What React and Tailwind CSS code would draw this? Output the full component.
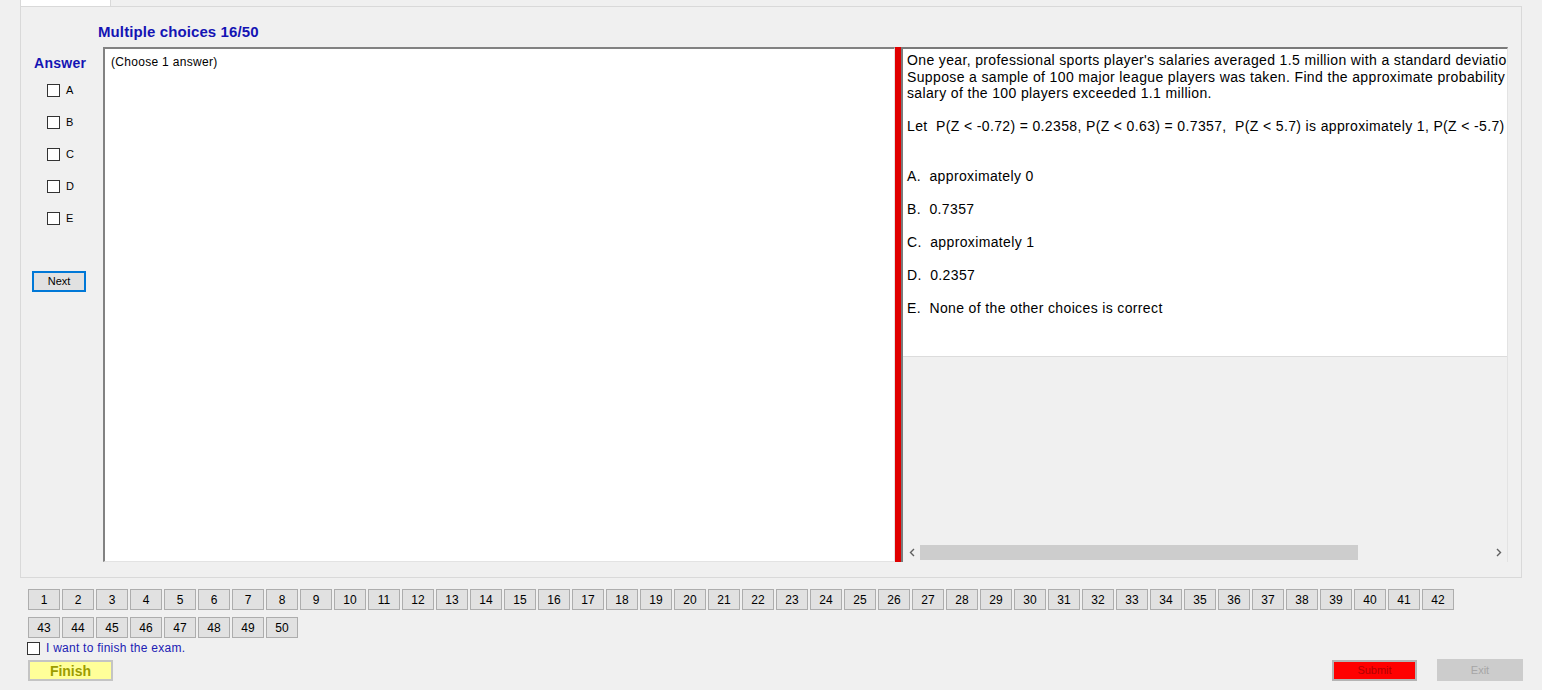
import React from "react";

const questionLines = [
  "One year, professional sports player's salaries averaged 1.5 million with a standard deviation of 0.8 million.",
  "Suppose a sample of 100 major league players was taken. Find the approximate probability that the average",
  "salary of the 100 players exceeded 1.1 million.",
  "",
  "Let  P(Z < -0.72) = 0.2358, P(Z < 0.63) = 0.7357,  P(Z < 5.7) is approximately 1, P(Z < -5.7) is approximately 0",
  "",
  "",
  "A.  approximately 0",
  "",
  "B.  0.7357",
  "",
  "C.  approximately 1",
  "",
  "D.  0.2357",
  "",
  "E.  None of the other choices is correct",
];

const choices = ["A", "B", "C", "D", "E"];

function Box() {
  return <span className="block w-[13px] h-[13px] border border-[#333] bg-white shrink-0" />;
}

export default function App() {
  const numbers = Array.from({ length: 50 }, (_, i) => i + 1);

  return (
    <div className="w-[1542px] h-[690px] bg-[#f0f0f0] overflow-hidden flex flex-col font-['Liberation_Sans',Arial,sans-serif] text-black">
      {/* tab strip */}
      <div className="h-[6px] flex">
        <div className="ml-[20px] w-[91px] h-[6px] bg-white border-x border-[#d9d9d9]" />
      </div>

      {/* tab page */}
      <div className="ml-[20px] w-[1502px] h-[572px] border border-[#d9d9d9] bg-[#f0f0f0] flex flex-col pt-[17px]">
        <div className="pl-[77px] h-[16px] leading-[16px] text-[15px] font-bold text-[#1414b4] tracking-[0.1px] mb-[7px]">
          Multiple choices 16/50
        </div>

        <div className="flex h-[515px]">
          {/* answer column */}
          <div className="w-[82px] shrink-0 flex flex-col pt-[8px]">
            <div className="pl-[13px] h-[16px] leading-[16px] text-[14px] font-bold text-[#1414b4] tracking-[0.3px]">
              Answer
            </div>
            <div className="flex flex-col gap-[12px] mt-[9px] pl-[26px]">
              {choices.map((c) => (
                <div key={c} className="h-[20px] flex items-center gap-[6px] text-[11px]">
                  <Box />
                  <span>{c}</span>
                </div>
              ))}
            </div>
            <div className="pl-[11px] mt-[40px]">
              <button className="w-[54px] h-[21px] border-2 border-[#0078d7] bg-[#e1e1e1] text-[11px] leading-none">
                Next
              </button>
            </div>
          </div>

          {/* answer text box */}
          <div className="w-[792px] shrink-0 bg-white border-t-2 border-l-2 border-[#828282] border-r border-b border-r-[#e3e3e3] border-b-[#e3e3e3] pl-[6px] pt-[6px] text-[12px] leading-[15px] tracking-[0.3px]">
            (Choose 1 answer)
          </div>

          {/* splitter */}
          <div className="w-[6px] shrink-0 bg-[#e00000]" />

          {/* question panel */}
          <div className="w-[607px] shrink-0 flex flex-col border-l-2 border-t-2 border-[#7a7a7a] border-r border-r-[#e3e3e3]">
            <div className="h-[308px] bg-white border-b border-[#dcdcdc] overflow-hidden pl-[4px] pt-[3px] text-[14px] leading-[16.5px] tracking-[0.36px] whitespace-pre">
              {questionLines.map((l, i) => (
                <div key={i} className="h-[16.5px]">
                  {l}
                </div>
              ))}
            </div>
            <div className="flex-1" />
            <div className="h-[17px] flex items-stretch mb-[1px] bg-[#f0f0f0]">
              <div className="w-[17px] flex items-center justify-center text-[#606060]">
                <svg width="6" height="9" viewBox="0 0 6 9">
                  <path d="M5 1 L1.5 4.5 L5 8" stroke="currentColor" strokeWidth="1.4" fill="none" />
                </svg>
              </div>
              <div className="flex-1 flex items-center">
                <div className="w-[438px] h-[15px] bg-[#cdcdcd]" />
              </div>
              <div className="w-[17px] flex items-center justify-center text-[#606060]">
                <svg width="6" height="9" viewBox="0 0 6 9">
                  <path d="M1 1 L4.5 4.5 L1 8" stroke="currentColor" strokeWidth="1.4" fill="none" />
                </svg>
              </div>
            </div>
          </div>
        </div>
      </div>

      {/* question navigator */}
      <div className="pl-[28px] pt-[11px] grid grid-cols-[repeat(42,32px)] gap-x-[2px] gap-y-[7px]">
        {numbers.map((n) => (
          <button
            key={n}
            className="h-[21px] bg-[#e1e1e1] border border-[#adadad] text-[12px] leading-none"
          >
            {n}
          </button>
        ))}
      </div>

      <label className="mt-[3px] ml-[27px] h-[14px] flex items-center gap-[6px] text-[12px] tracking-[0.25px] text-[#2020b4]">
        <span className="block w-[13px] h-[13px] border border-[#333] bg-white" />
        I want to finish the exam.
      </label>

      <div className="mt-[5px] flex items-start pl-[28px] pr-[19px]">
        <button className="w-[85px] h-[21px] bg-[#ffff99] border-2 border-[#c4c4c4] text-[14px] font-bold text-[#9c9c00] leading-none">
          Finish
        </button>
        <button className="ml-auto w-[85px] h-[21px] bg-[#ff0000] border-2 border-[#b4b4b4] text-[11px] text-[#b00000] leading-none">
          Submit
        </button>
        <button className="ml-[20px] -mt-[1px] w-[86px] h-[22px] bg-[#cccccc] text-[11px] text-[#a6a6a6] leading-none">
          Exit
        </button>
      </div>
    </div>
  );
}
